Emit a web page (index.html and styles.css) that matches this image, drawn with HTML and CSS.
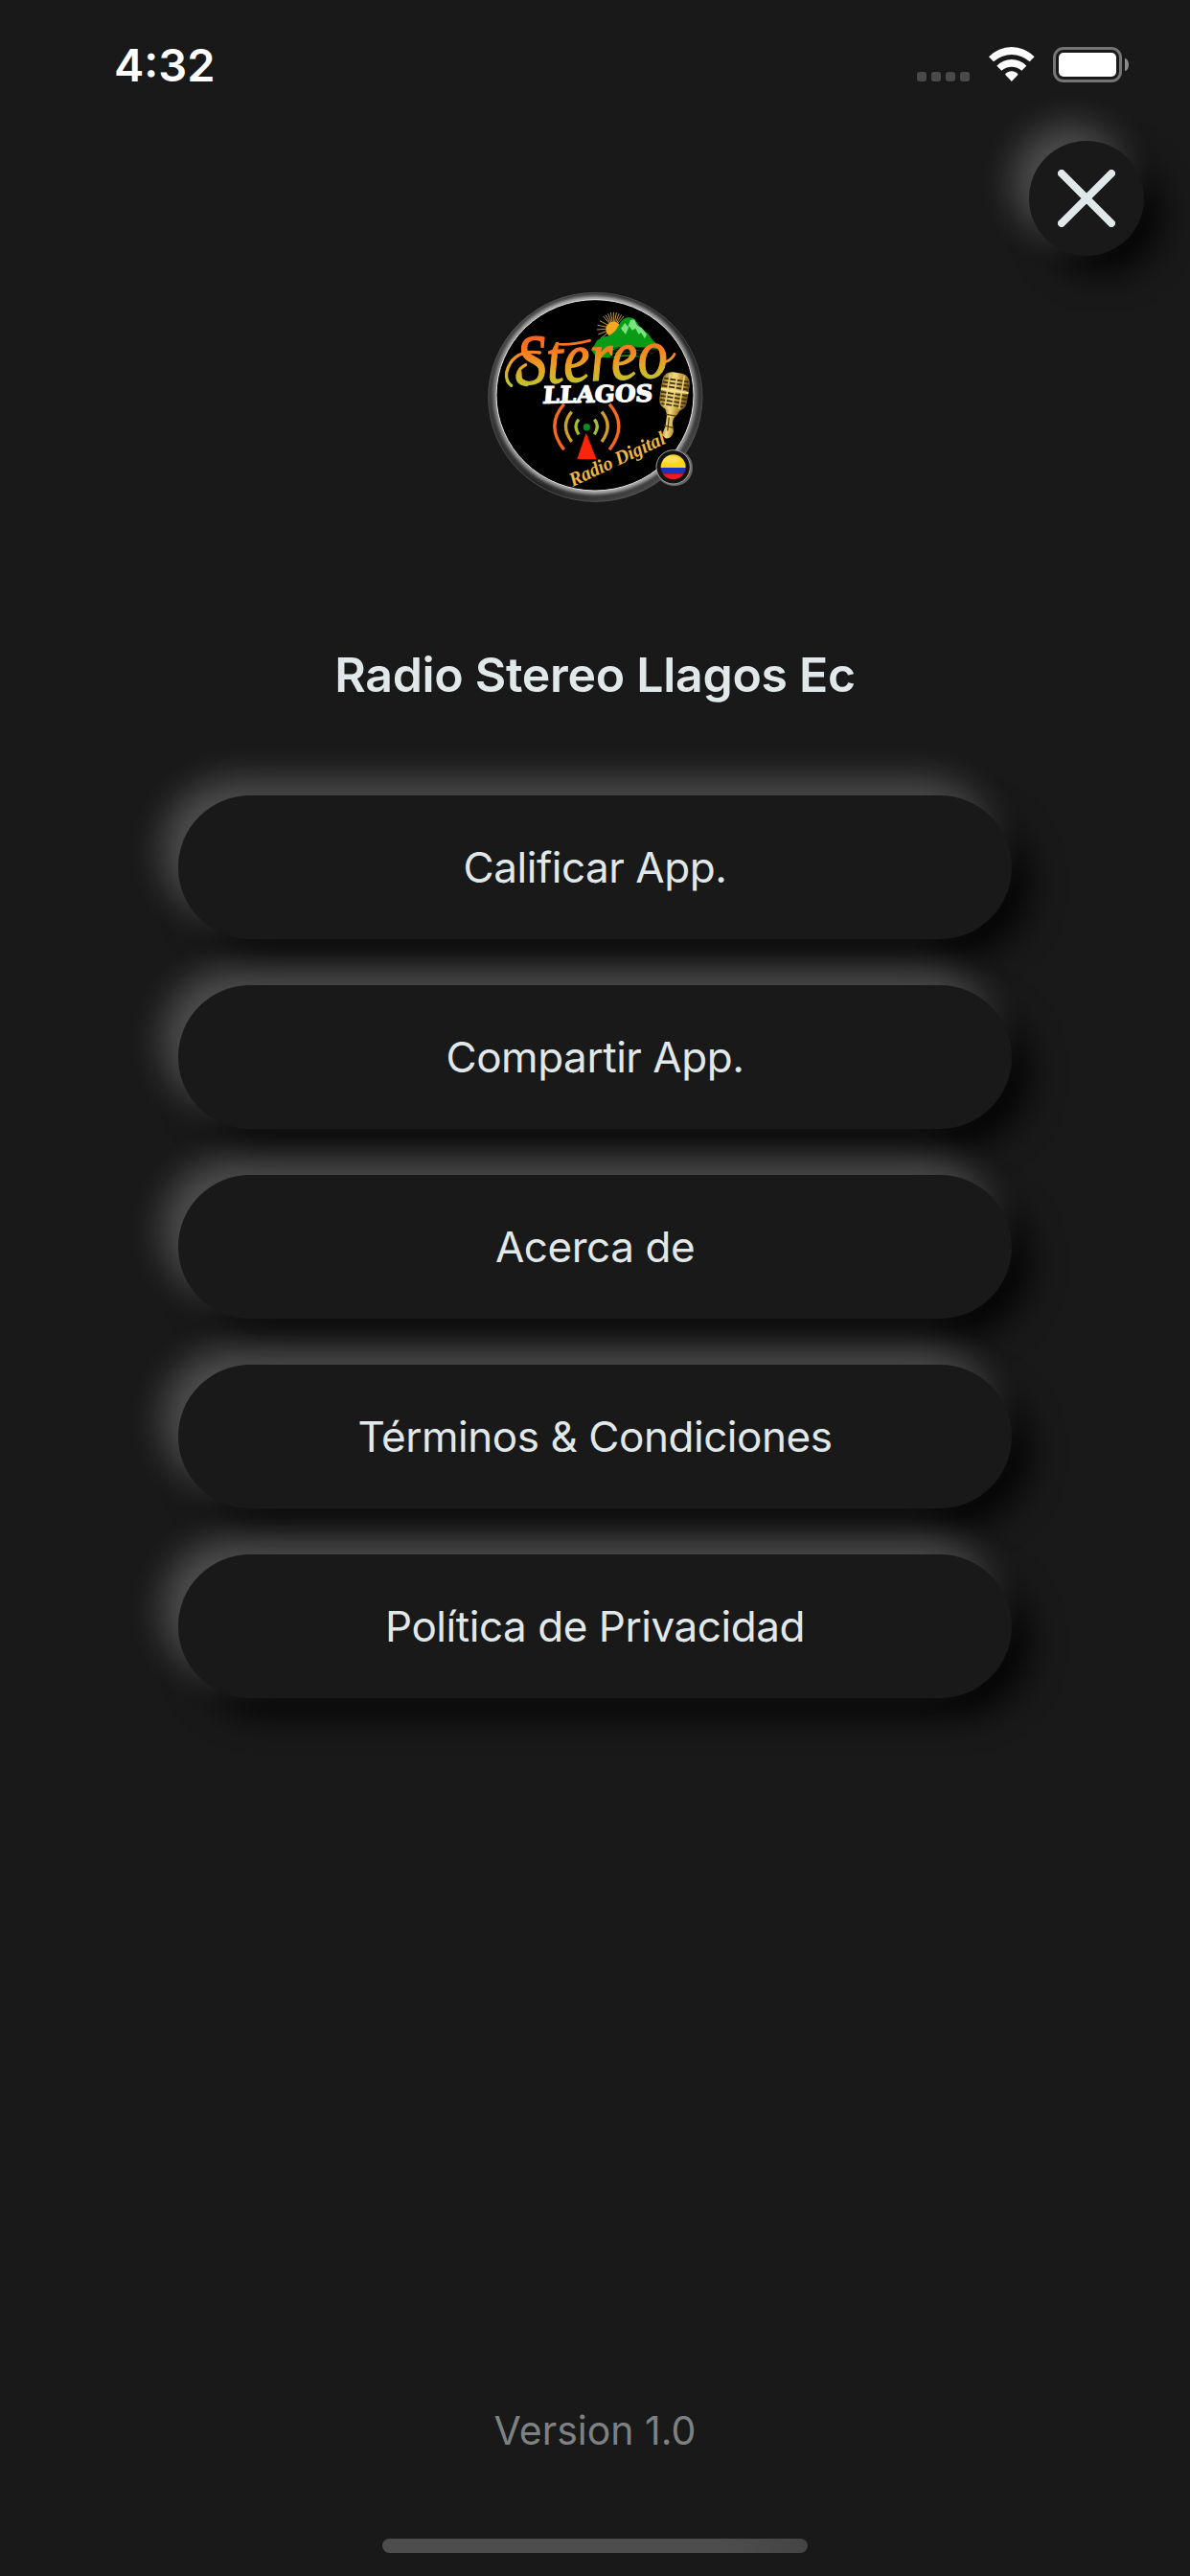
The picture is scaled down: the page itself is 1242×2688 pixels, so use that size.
FILE: index.html
```
<!DOCTYPE html>
<html lang="es">
<head>
    <meta charset="UTF-8">
    <meta name="viewport" content="width=device-width, initial-scale=1.0">
    <title>Radio Stereo Llagos Ec</title>
    <link rel="stylesheet" href="styles.css">
</head>
<body>
    <div class="status-bar">
        <span class="time">4:32</span>
        <div class="status-icons">
            <div class="signal"><i></i><i></i><i></i><i></i></div>
            <svg class="wifi" viewBox="305 87 144 108">
                <path d="M305 118A98 98 0 0 1 448 118L433 133A83.5 83.5 0 0 0 320 133Z"/>
                <path d="M330 146A64 64 0 0 1 423 146L408 161A47 47 0 0 0 345 161Z"/>
                <path d="M356 173A26 26 0 0 1 397 173L376.500 195Z"/>
            </svg>
            <div class="battery"><div class="battery-level"></div></div>
            <div class="battery-tip"></div>
        </div>
    </div>

    <div class="top">
        <button class="close-btn" aria-label="Cerrar">
            <svg viewBox="0 0 60 60"><path d="M4 4L56 56M56 4L4 56"/></svg>
        </button>
    </div>

    <svg class="logo" viewBox="3 0 720 720">
        <defs>
            <linearGradient id="script" gradientUnits="userSpaceOnUse" x1="0" y1="155" x2="0" y2="345">
                <stop offset="0" stop-color="#ff5a1c"/>
                <stop offset="0.35" stop-color="#fb7a20"/>
                <stop offset="0.65" stop-color="#e3a628"/>
                <stop offset="1" stop-color="#b5cc2c"/>
            </linearGradient>
            <linearGradient id="rim" x1="0" y1="0" x2="1" y2="1">
                <stop offset="0" stop-color="#5c5a5a"/>
                <stop offset="0.3" stop-color="#3c3a3a"/>
                <stop offset="0.6" stop-color="#292727"/>
                <stop offset="1" stop-color="#666"/>
            </linearGradient>
            <linearGradient id="shine" x1="0" y1="0" x2="0" y2="1">
                <stop offset="0" stop-color="#eee"/>
                <stop offset="0.5" stop-color="#aaa"/>
                <stop offset="1" stop-color="#ddd"/>
            </linearGradient>
            <linearGradient id="gold" x1="0" y1="0" x2="1" y2="0">
                <stop offset="0" stop-color="#94721f"/>
                <stop offset="0.4" stop-color="#f2dc83"/>
                <stop offset="0.7" stop-color="#c39a36"/>
                <stop offset="1" stop-color="#6f521a"/>
            </linearGradient>
            <filter id="soft" x="-10%" y="-10%" width="120%" height="120%"><feGaussianBlur stdDeviation="6"/></filter>
        </defs>

        <!-- metal ring -->
        <ellipse cx="364" cy="373" rx="336" ry="328" fill="url(#rim)"/>
        <ellipse cx="364" cy="373" rx="335" ry="327" fill="none" stroke="#5b5959" stroke-width="2"/>
        <circle cx="611" cy="594" r="58" fill="#676565"/>
        <ellipse cx="364" cy="369" rx="322" ry="312" fill="none" stroke="#242222" stroke-width="9" filter="url(#soft)"/>
        <ellipse cx="363" cy="367" rx="311" ry="302" fill="none" stroke="url(#shine)" stroke-width="12" filter="url(#soft)"/>
        <ellipse cx="363" cy="367" rx="309" ry="299" fill="#000" stroke="#e8e8e8" stroke-width="3"/>

        <!-- sun and hill -->
        <path d="M421 158L421 107M421 158L404 112M421 158L389 120M421 158L378 134M421 158L371 148M421 158L369 162M421 158L373 177M421 158L381 189M421 158L438 112M421 158L453 120M421 158L412 108M421 158L430 108M421 158L396 116M421 158L446 115" stroke="#e5b65c" stroke-width="2.500"/>
        <circle cx="421" cy="161" r="24" fill="#f5a81c"/>
        <path d="M350 224Q362 211 370 195L390 184Q410 183 428 164L443 138Q453 124 467 124Q484 123 493 137L506 156L528 173Q542 195 563 214L566 224Q520 214 467 216Q430 216 407 235L412 248Q470 234 512 248Q460 243 405 250L368 248Z" fill="#079b16"/>
        <path d="M444 158L457 141L466 153L474 132L486 130L495 149L509 156L525 176L519 190L507 171L500 177L490 158L480 164L470 151L459 177Z" fill="#7be282"/>
        <path d="M410 222Q470 208 562 226M407 230Q470 216 545 236M407 238Q470 224 530 246" fill="none" stroke="#064d0c" stroke-width="3"/>

        <!-- name -->
        <text class="logo-script" x="120" y="322" textLength="474" lengthAdjust="spacingAndGlyphs" transform="rotate(-3 350 320)" fill="url(#script)">Stereo</text>
        <path d="M150 335Q118 331 120 304Q124 282 146 272M190 234Q105 222 86 296Q83 325 101 337" fill="none" stroke="url(#script)" stroke-width="10" stroke-linecap="round"/>
        <path d="M245 207Q283 212 347 196M586 262Q604 255 612 238" fill="none" stroke="url(#script)" stroke-width="8" stroke-linecap="round"/>
        <text class="logo-block" x="198" y="389" textLength="343" lengthAdjust="spacingAndGlyphs" transform="translate(41 0) skewX(-6) rotate(-1 370 360)">LLAGOS</text>

        <!-- antenna -->
        <g fill="none" stroke-width="10">
            <path d="M266 395Q207 463 266 538M408 395Q467 463 408 538" stroke="#f5681d"/>
            <path d="M290 419Q253 463 290 513M384 419Q421 463 384 513" stroke="#cf9f2b"/>
            <path d="M312 443Q294 463 312 490M361 443Q379 463 361 490" stroke="#a8bd2b"/>
        </g>
        <circle cx="337" cy="467" r="11" fill="#078b23"/>
        <path d="M335 485L368 568H307Z" fill="#fb2508"/>

        <!-- microphone -->
        <g transform="rotate(9 610 360)">
            <path d="M584 400L642 402L631 426Q619 437 621 455L628 480Q624 506 606 504L594 496L600 466L599 430Z" fill="url(#gold)"/>
            <path d="M607 438L609 480M596 430L629 430M596 466L624 468" stroke="#5c4211" stroke-width="4"/>
            <rect x="568" y="296" width="87" height="118" rx="30" fill="url(#gold)"/>
            <path d="M573 319H650M570 331H653M570 343H653M570 363H653M570 375H653M570 387H652M577 399H646" stroke="#3f300f" stroke-width="5"/>
            <path d="M589 302V407M612 298V411M634 302V407" stroke="#e8cf74" stroke-width="5"/>
            <path d="M568 353H655" stroke="#f2df91" stroke-width="7"/>
        </g>
        <text class="logo-tag" x="293" y="654" textLength="325" lengthAdjust="spacingAndGlyphs" transform="rotate(-25 293 654)">Radio Digital</text>

        <!-- flag badge -->
        <circle cx="608" cy="592" r="53" fill="#131313" stroke="#a5a5a5" stroke-width="3"/>
        <clipPath id="flag"><circle cx="608" cy="592" r="39"/></clipPath>
        <g clip-path="url(#flag)">
            <rect x="565" y="550" width="86" height="44" fill="#ffd51c"/>
            <rect x="565" y="594" width="86" height="19" fill="#1734c4"/>
            <rect x="565" y="613" width="86" height="22" fill="#f01825"/>
            <ellipse cx="600" cy="568" rx="27" ry="11" fill="#fff" opacity="0.25"/>
        </g>
    </svg>

    <h1>Radio Stereo Llagos Ec</h1>

    <div class="menu">
        <button class="menu-btn">Calificar App.</button>
        <button class="menu-btn">Compartir App.</button>
        <button class="menu-btn">Acerca de</button>
        <button class="menu-btn">Términos &amp; Condiciones</button>
        <button class="menu-btn">Política de Privacidad</button>
    </div>

    <p class="version">Version 1.0</p>
    <div class="home-indicator"></div>
</body>
</html>
```

FILE: styles.css
```
* {
    box-sizing: border-box;
}
body {
    margin: 0;
    height: 2688px;
    display: flex;
    flex-direction: column;
    align-items: center;
    background: #191919;
    color: #e1e8e9;
    font-family: Inter, "Liberation Sans", sans-serif;
    overflow: hidden;
}
button {
    border: none;
    padding: 0;
    color: inherit;
    font-family: inherit;
    background: #191919;
    cursor: pointer;
    /* light from the top left, dark to the bottom right */
    box-shadow: -17px -17px 36px rgba(255,255,255,0.24), 17px 17px 36px rgba(0,0,0,0.9);
}

/* Status bar */
.status-bar {
    width: 100%;
    height: 132px;
    padding: 0 64px 0 119px;
    display: flex;
    justify-content: space-between;
    color: #fff;
}
.time {
    margin-top: 38px;
    font-size: 47px;
    line-height: 60px;
    font-weight: 600;
}
.status-icons {
    display: flex;
    align-items: flex-start;
    margin-top: 49px;
}
.signal {
    display: flex;
    gap: 5px;
    margin: 26px 20px 0 0;
}
.signal i {
    width: 10px;
    height: 10px;
    border-radius: 3px;
    background: #4a4a4a;
}
.wifi {
    width: 48px;
    height: 36px;
    margin-right: 19px;
    fill: #fff;
}
.battery {
    width: 72px;
    height: 37px;
    padding: 3px;
    border: 3px solid #757575;
    border-radius: 11px;
}
.battery-level {
    height: 25px;
    border-radius: 5px;
    background: #fff;
}
.battery-tip {
    width: 4px;
    height: 13px;
    margin: 12px 0 0 3px;
    border-radius: 0 4px 4px 0 / 0 7px 7px 0;
    background: #8b8b8b;
}

/* Close button */
.top {
    width: 100%;
    padding: 15px 48px 0 0;
    display: flex;
    justify-content: flex-end;
}
.close-btn {
    width: 120px;
    height: 120px;
    display: flex;
    align-items: center;
    justify-content: center;
    border-radius: 50%;
}
.close-btn svg {
    width: 60px;
    height: 60px;
    stroke: #e1e8e9;
    stroke-width: 8;
    stroke-linecap: round;
}

/* Logo */
.logo {
    width: 240px;
    height: 240px;
    margin-top: 23px;
    flex-shrink: 0;
}
.logo-script {
    font: italic 222px "Liberation Serif", serif;
    stroke: url(#script);
    stroke-width: 4;
}
.logo-block {
    font: bold 72px "DejaVu Serif", serif;
    fill: #fff;
    stroke: #fff;
    stroke-width: 4;
}
.logo-tag {
    font: italic bold 62px "Liberation Serif", serif;
    fill: #efb83e;
}

h1 {
    margin: 144px 0 96px;
    font-size: 50px;
    line-height: 60px;
    font-weight: 600;
    letter-spacing: -0.3px;
}

/* Menu */
.menu {
    width: 870px;
    display: flex;
    flex-direction: column;
    gap: 48px;
}
.menu-btn {
    height: 150px;
    border-radius: 75px;
    font-size: 44px;
    line-height: 60px;
    letter-spacing: -0.45px;
}

/* Footer */
.version {
    margin: auto 0 88px;
    font-size: 41px;
    line-height: 50px;
    color: #7d8181;
}
.home-indicator {
    width: 444px;
    height: 15px;
    margin-bottom: 24px;
    flex-shrink: 0;
    border-radius: 8px;
    background: linear-gradient(90deg, #4d4d4d 80%, #444);
}
```
